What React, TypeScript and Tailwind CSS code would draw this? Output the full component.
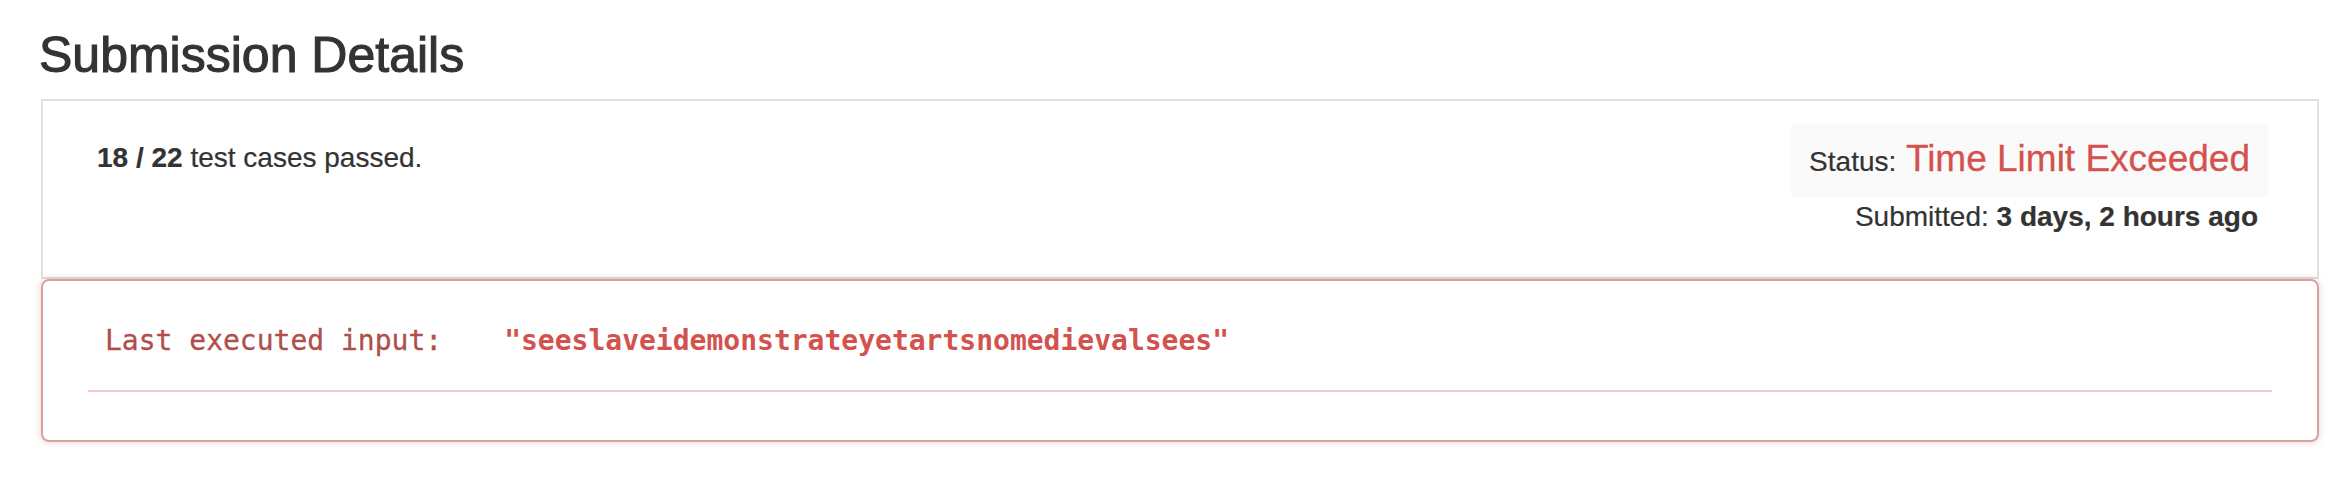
import React from 'react'

const sans = 'font-["Liberation_Sans",Arial,sans-serif]'
const mono = 'font-["DejaVu_Sans_Mono","Liberation_Mono",monospace]'

export default function App() {
  return (
    <div className={`${sans} bg-white text-[#333] pl-[41px] pr-[25px] pt-[25px] min-h-[482px]`}>
      <h3 className="text-[50px] leading-[60px] font-normal -ml-[2px] mb-[14px] [-webkit-text-stroke:1.1px_#333]">
        Submission Details
      </h3>

      <div className="border-2 border-[#e0e0e0] pl-[54px] pr-[49px] pt-[23px] pb-[40px] flex justify-between items-start">
        <div className="text-[28px] leading-[40px] mt-[14px] [-webkit-text-stroke:0.2px_#333]">
          <strong className="font-bold">18 / 22</strong> test cases passed.
        </div>
        <div className="flex flex-col items-end">
          <div className="bg-[#fafafa] px-[18px] pt-[13px] pb-[16px] text-[37px] leading-[44px] whitespace-nowrap">
            <span className="text-[28px] leading-[28px] text-[#333] [-webkit-text-stroke:0.2px_#333]">Status:</span>{' '}
            <span className="text-[#d4524e] [-webkit-text-stroke:0.3px_#d4524e]">Time Limit Exceeded</span>
          </div>
          <div className="text-[28px] leading-[40px] mr-[10px] whitespace-nowrap [-webkit-text-stroke:0.2px_#333]">
            Submitted: <strong className="font-bold">3 days, 2 hours ago</strong>
          </div>
        </div>
      </div>

      <div className="border-2 border-[#d6a2a2] rounded-[8px] shadow-[0_0_7px_rgba(190,90,90,0.3)] px-[45px] pt-[40px] pb-[48px]">
        <div className={`${mono} text-[28px] leading-[40px] pl-[17px] flex whitespace-nowrap`}>
          <span className="text-[#b04e4b] [-webkit-text-stroke:0.3px_#b04e4b]">Last executed input:</span>
          <span className="ml-[62px] font-bold text-[#d4524e]">
            "seeslaveidemonstrateyetartsnomedievalsees"
          </span>
        </div>
        <div className="h-[2px] bg-[#f2cbcb] mt-[29px]" />
      </div>
    </div>
  )
}
